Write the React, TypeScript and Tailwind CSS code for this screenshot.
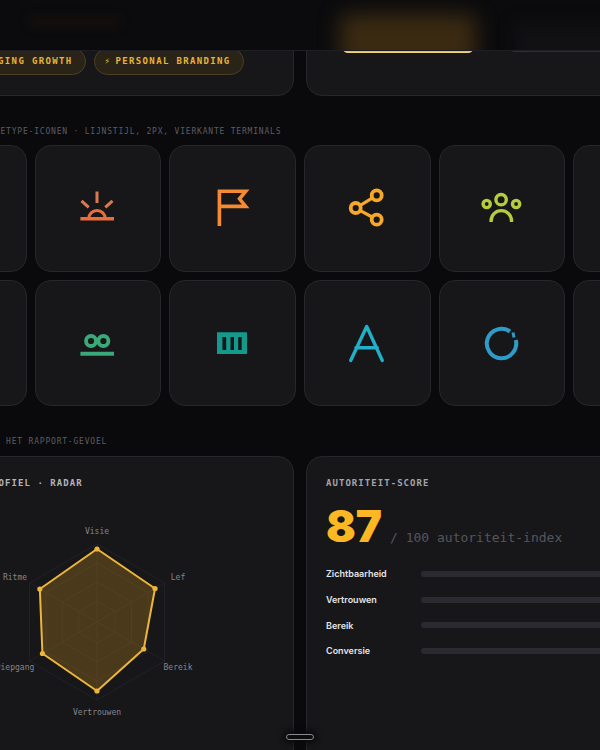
import React from 'react';

const mono = "font-['DejaVu_Sans_Mono','Liberation_Mono',monospace]";
const icon = 'overflow-visible';

function Sun() {
  return (
    <svg className={icon} width="36" height="36" viewBox="0 0 36 36" fill="none" stroke="#ea6d3c" strokeWidth="3">
      <path d="M0.4 28.7H34" strokeWidth="3.4" />
      <path d="M8.7 28.7A8.3 8.3 0 0 1 25.3 28.7" />
      <path d="M17 1.4V13M1.5 10.8L8.7 17.4M32.5 10.8L25.3 17.4" stroke="#d97a4e" />
    </svg>
  );
}

function Flag() {
  return (
    <svg className={icon} width="36" height="36" viewBox="0 0 36 36" fill="none" stroke="#f58a30" strokeWidth="3.6">
      <path d="M4.4 36V1.2H30.7L24.5 8.8L30.7 16.4H4.4" />
    </svg>
  );
}

function Share() {
  return (
    <svg className={icon} width="36" height="36" viewBox="0 0 36 36" fill="none" stroke="#f5a82a" strokeWidth="3.8">
      <circle cx="27.7" cy="5.4" r="5" />
      <circle cx="6.7" cy="18" r="5" />
      <circle cx="27.7" cy="29.7" r="5" />
      <path d="M11.3 15.3L23.1 8.2M11.3 20.6L23.1 27" strokeWidth="3.2" />
    </svg>
  );
}

function People() {
  return (
    <svg className={icon} width="36" height="36" viewBox="0 0 36 36" fill="none" stroke="#b5cc3f" strokeWidth="3.4">
      <circle cx="17.1" cy="9.7" r="5.2" />
      <circle cx="2.7" cy="14" r="3.6" />
      <circle cx="32.1" cy="14" r="3.6" />
      <path d="M7.1 32V30.8A10.2 10.2 0 0 1 27.5 30.8V32" />
    </svg>
  );
}

function Loops() {
  return (
    <svg className={icon} width="36" height="36" viewBox="0 0 36 36" fill="none" stroke="#3aa878" strokeWidth="3.8">
      <circle cx="11" cy="16" r="5" />
      <circle cx="23.4" cy="16" r="5" />
      <path d="M0.4 28.7H34" strokeWidth="4" />
    </svg>
  );
}

function Columns() {
  return (
    <svg className={icon} width="36" height="36" viewBox="0 0 36 36">
      <path
        fill="#149a8c"
        fillRule="evenodd"
        d="M2 7.3H32V29H2ZM7.4 12V25H11.2V12ZM15.5 12V25H19V12ZM23.2 12V25H26.7V12Z"
      />
    </svg>
  );
}

function Peak() {
  return (
    <svg className={icon} width="36" height="36" viewBox="0 0 36 36" fill="none" stroke="#22b0c8" strokeWidth="3.4" strokeLinecap="round" strokeLinejoin="round">
      <path d="M1.7 35.5L17.7 1.5L33.3 35.5M6.9 22.7H28.3" />
    </svg>
  );
}

function Cycle() {
  return (
    <svg className={icon} width="36" height="36" viewBox="0 0 36 36" fill="none" stroke="#2e9cc8" strokeWidth="4">
      <path d="M26 6.5A14.7 14.7 0 1 0 31.8 15" />
      <path d="M29 7.5L30 12.5" strokeWidth="3" />
    </svg>
  );
}

const rowOne = [null, Sun, Flag, Share, People, null];
const rowTwo = [null, Loops, Columns, Peak, Cycle, null];
const scores = ['Zichtbaarheid', 'Vertrouwen', 'Bereik', 'Conversie'];

// radar helpers
const cx = 150;
const cy = 106;
const angles = [-90, -30, 30, 90, 150, 210];
const pointAt = (r: number, a: number) => {
  const rad = (a * Math.PI) / 180;
  return [cx + r * Math.cos(rad), cy + r * Math.sin(rad)];
};
const ring = (r: number) => angles.map(a => pointAt(r, a).join(',')).join(' ');
const values = [73, 67, 54, 69, 63, 66];
const shape = values.map((v, i) => pointAt(v, angles[i]));
const radarLabels = [
  { text: 'Visie', x: 150, y: 15 },
  { text: 'Lef', x: 231, y: 61 },
  { text: 'Bereik', x: 231, y: 151 },
  { text: 'Vertrouwen', x: 150, y: 196 },
  { text: 'Diepgang', x: 68, y: 151 },
  { text: 'Ritme', x: 68, y: 61 },
];

function Radar() {
  return (
    <svg width="300" height="226" viewBox="0 0 300 226" fill="none">
      {[78, 59, 40, 21].map(r => (
        <polygon key={r} points={ring(r)} stroke="#212127" strokeWidth="1" />
      ))}
      {angles.map(a => {
        const [x, y] = pointAt(78, a);
        return <line key={a} x1={cx} y1={cy} x2={x} y2={y} stroke="#212127" strokeWidth="1" />;
      })}
      <polygon
        points={shape.map(p => p.join(',')).join(' ')}
        fill="#e8a020"
        fillOpacity="0.25"
        stroke="#ecb63a"
        strokeWidth="2"
        strokeLinejoin="round"
      />
      {shape.map(([x, y], i) => (
        <circle key={i} cx={x} cy={y} r="2.6" fill="#ecb63a" />
      ))}
      {radarLabels.map(l => (
        <text
          key={l.text}
          x={l.x}
          y={l.y}
          textAnchor="middle"
          dominantBaseline="central"
          fill="#85858b"
          fontSize="8"
          fontFamily="DejaVu Sans Mono, Liberation Mono, monospace"
        >
          {l.text}
        </text>
      ))}
    </svg>
  );
}

function IconRow({ icons }: { icons: (typeof Sun | null)[] }) {
  return (
    <div className="grid grid-cols-6 gap-2">
      {icons.map((Icon, i) => (
        <div key={i} className="aspect-square rounded-2xl border border-[#26262b] bg-[#17171a] flex items-center justify-center">
          {Icon && <Icon />}
        </div>
      ))}
    </div>
  );
}

function Chip({ children }: { children: React.ReactNode }) {
  return (
    <span className={`${mono} h-[27px] flex items-center pl-[10px] pr-3 rounded-full border border-[#4c3f22] bg-[#2a2418] text-[#e8b53a] text-[9px] font-bold tracking-[0.15em] whitespace-nowrap`}>
      <span className="w-[11px] text-[9px] tracking-normal">⚡</span>
      {children}
    </span>
  );
}

export default function App() {
  return (
    <div className="relative w-[600px] h-[750px] overflow-hidden bg-[#0a0a0c]">
      <div className="w-[800px] -ml-[100px] -mt-[20px]">
        <div className="grid grid-cols-2 gap-3">
          <div className="h-[116px] rounded-2xl border border-[#26262b] bg-[#17171a] pt-[67px]">
            <div className="flex gap-2 pl-[48px]">
              <Chip>EMERGING GROWTH</Chip>
              <Chip>PERSONAL BRANDING</Chip>
            </div>
          </div>
          <div className="h-[116px] rounded-2xl border border-[#26262b] bg-[#17171a] pt-[29px] pl-[34px] flex items-start gap-[32px]">
            <div className="w-[134px] h-[43px] rounded-lg bg-[#f0c044] shadow-[inset_0_-1px_0_#f3d56e]" />
            <div className="w-[140px] h-[42px] rounded-lg border border-[#2e2e33] bg-[#1b1b1f]" />
          </div>
        </div>

        <div className={`${mono} mt-[30px] mb-[7px] h-3 leading-3 text-[8px] tracking-[0.8px] text-[#5c5c63] pl-[78px] whitespace-nowrap`}>
          ARCHETYPE-ICONEN · LIJNSTIJL, 2PX, VIERKANTE TERMINALS
        </div>

        <div className="flex flex-col gap-2">
          <IconRow icons={rowOne} />
          <IconRow icons={rowTwo} />
        </div>

        <div className={`${mono} mt-[30px] mb-[8px] h-3 leading-3 text-[8px] tracking-[0.8px] text-[#5c5c63] pl-[78px] whitespace-nowrap`}>
          VOOR HET RAPPORT-GEVOEL
        </div>

        <div className="grid grid-cols-2 gap-3">
          <div className="h-[320px] rounded-2xl border border-[#26262b] bg-[#17171a] pt-5 px-5">
            <div className={`${mono} text-[9px] leading-3 tracking-[1.05px] font-bold text-[#b4b4b9] whitespace-nowrap`}>
              AUTORITEITPROFIEL · RADAR
            </div>
            <div className="flex justify-center mt-[27px]">
              <Radar />
            </div>
          </div>
          <div className="h-[320px] rounded-2xl border border-[#26262b] bg-[#17171a] pt-5 pl-[19px] pr-5">
            <div className={`${mono} text-[9px] leading-3 tracking-[1.05px] font-bold text-[#a4a4aa] whitespace-nowrap`}>
              AUTORITEIT-SCORE
            </div>
            <div className="flex items-baseline gap-2 mt-[15px]">
              <span className="font-['Inter',sans-serif] font-black text-[44px] leading-[44px] text-[#fbb824]">87</span>
              <span className={`${mono} text-[13px] text-[#55555c] whitespace-nowrap`}>/ 100 autoriteit-index</span>
            </div>
            <div className="flex flex-col gap-[9.8px] mt-[17.5px]">
              {scores.map(s => (
                <div key={s} className="flex items-center h-4">
                  <span className="w-[95px] font-['Inter',sans-serif] font-semibold text-[9px] text-[#e4e4e6]">{s}</span>
                  <div className="flex-1 h-[6px] rounded-full bg-[#2a2a30]" />
                </div>
              ))}
            </div>
          </div>
        </div>
      </div>

      {/* sticky top bar, the glows stand for what scrolls blurred under it */}
      <div className="absolute top-0 inset-x-0 h-[51px] overflow-hidden border-b border-[#1f1f23] bg-[#0b0b0d]">
        <div className="absolute left-[30px] top-[17px] w-[90px] h-[9px] bg-[#2a1610]/40 blur-[5px]" />
        <div className="absolute left-[340px] top-[14px] w-[136px] h-[56px] rounded-lg bg-[#3a2a12] blur-[10px]" />
        <div className="absolute left-[515px] top-[24px] w-[100px] h-[40px] bg-[#111114] blur-[8px]" />
      </div>

      {/* scroll handle */}
      <div className="absolute left-[286px] top-[734px] w-[28px] h-[6px] rounded-full border border-[#8a8a8e] bg-[#0c0c0e] shadow-[0_0_6px_3px_#0a0a0c]" />
    </div>
  );
}
